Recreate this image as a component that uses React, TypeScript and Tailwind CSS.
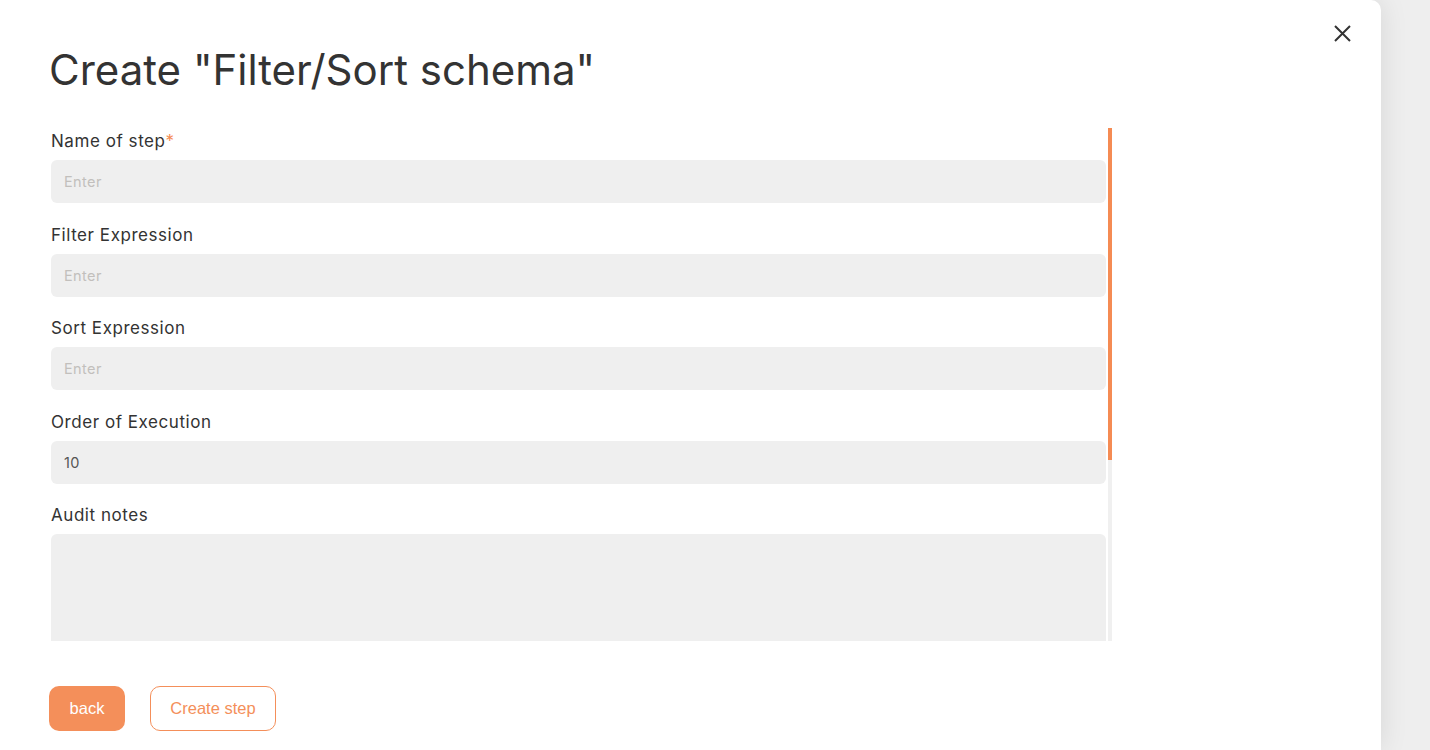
import React from 'react';

const fields = [
  { label: 'Name of step', required: true, placeholder: 'Enter', value: '' },
  { label: 'Filter Expression', placeholder: 'Enter', value: '' },
  { label: 'Sort Expression', placeholder: 'Enter', value: '' },
  { label: 'Order of Execution', placeholder: 'Enter', value: '10' },
];

const font = { fontFamily: 'Inter, "Open Sans", sans-serif' };

const App = () => {
  return (
    <div className="flex h-[750px] w-[1430px] overflow-hidden bg-[#eeeeee]">
      <div
        className="relative flex h-full w-[1381px] flex-col rounded-tr-[10px] bg-white text-[#333333] shadow-[0_0_28px_rgba(0,0,0,0.10)]"
        style={font}
      >
        <button className="absolute left-[1333px] top-[24px] text-[#333333]">
          <svg width="19" height="19" viewBox="0 0 19 19" fill="none" stroke="currentColor" strokeWidth="2">
            <path d="M2 2 L17 17 M17 2 L2 17" />
          </svg>
        </button>

        <h1 className="ml-[49px] mt-[46px] text-[42px] leading-[48px] font-normal">
          Create "Filter/Sort schema"
        </h1>

        {/* form area with its slim scroll bar */}
        <div className="ml-[51px] mt-[34px] flex h-[513px] w-[1061px] gap-[2px]">
          <div className="flex-1 overflow-hidden">
            <div className="flex flex-col gap-[19.5px] pt-[1px]">
              {fields.map((f) => (
                <div key={f.label} className="flex flex-col gap-[7px]">
                  <label className="text-[17px] leading-[24px] tracking-[0.55px]">
                    {f.label}
                    {f.required && <span className="text-[#f58b53]">*</span>}
                  </label>
                  <input
                    readOnly
                    value={f.value}
                    placeholder={f.placeholder}
                    className="h-[43px] w-full rounded-[6px] bg-[#efefef] px-[13px] text-[14.5px] tracking-[0.4px] text-[#555555] outline-none placeholder:text-[#c2bfbc]"
                  />
                </div>
              ))}
              <div className="flex flex-col gap-[7px]">
                <label className="text-[17px] leading-[24px] tracking-[0.55px]">Audit notes</label>
                <textarea
                  readOnly
                  className="h-[270px] w-full resize-none rounded-[6px] bg-[#efefef] px-[13px] py-[10px] text-[14px] outline-none"
                />
              </div>
            </div>
          </div>
          <div className="flex w-[4px] flex-col bg-[#f0f0f0]">
            <div className="h-[332px] w-full bg-[#f58b53]" />
          </div>
        </div>

        <div className="ml-[49px] mt-[45px] flex gap-[25px]" style={{ fontFamily: '"Liberation Sans", Arial, sans-serif' }}>
          <button className="h-[45px] w-[76px] rounded-[10px] bg-[#f48f5a] text-[16.5px] text-white">back</button>
          <button className="h-[45px] w-[126px] rounded-[10px] border border-[#f48f5a] bg-white text-[16.5px] text-[#f48f5a]">
            Create step
          </button>
        </div>
      </div>
    </div>
  );
};

export default App;
